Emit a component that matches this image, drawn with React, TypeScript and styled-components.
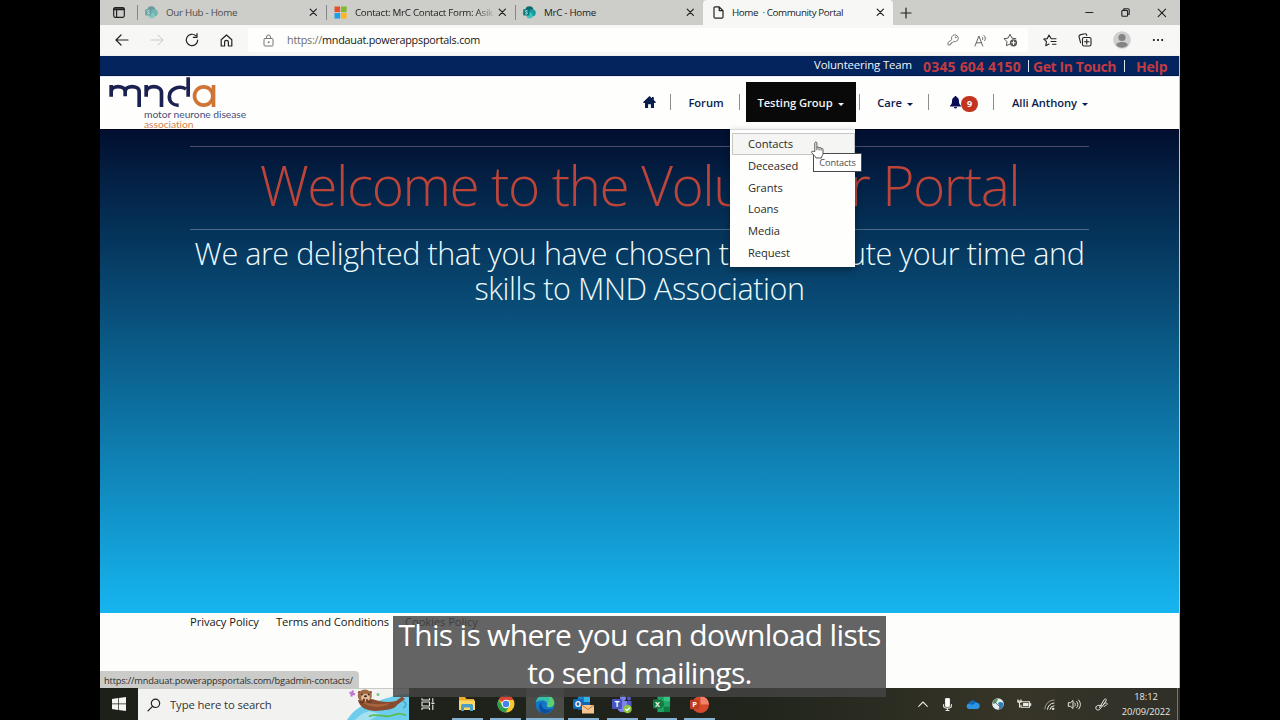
import React from "react";
import styled, { createGlobalStyle } from "styled-components";

const Global = createGlobalStyle`
  * { box-sizing: border-box; }
  body { margin: 0; background: #000; font-family: "Open Sans", "Noto Sans", sans-serif; }
  svg { display: block; flex: none; overflow: visible; }
`;

const Stage = styled.div`
  display: flex;
  justify-content: center;
  width: 1280px;
  height: 720px;
  background: #000;
  overflow: hidden;
`;

const Screen = styled.div`
  position: relative;
  display: flex;
  flex-direction: column;
  width: 1080px;
  height: 720px;
  background: #fdfefb;
`;

/* ---------- Browser chrome ---------- */

const TabStrip = styled.div`
  display: flex;
  align-items: stretch;
  height: 25px;
  background: #cdcdca;
`;

const TabMenu = styled.div`
  display: flex;
  align-items: center;
  width: 37px;
  padding-left: 13px;
`;

const Tab = styled.div<{ $width: number; $active?: boolean; $faded?: boolean }>`
  position: relative;
  display: flex;
  align-items: center;
  width: ${(p) => p.$width}px;
  padding: 0 8px 0 ${(p) => (p.$active ? 10 : 7)}px;
  background: ${(p) => (p.$active ? "#f7f8f5" : "transparent")};
  border-radius: ${(p) => (p.$active ? "4px 4px 0 0" : "0")};
  color: ${(p) => (p.$faded ? "#4c4e4b" : "#20211f")};
  font-size: 9.8px;
  letter-spacing: ${(p) => (p.$active ? "-0.4px" : "-0.3px")};
`;

const TabDivider = styled.span`
  align-self: center;
  width: 1px;
  height: 15px;
  background: #85868a;
`;

const TabTitle = styled.span<{ $clip?: boolean }>`
  flex: 1;
  margin-left: 8px;
  overflow: hidden;
  white-space: pre;
  ${(p) => p.$clip && "mask-image: linear-gradient(90deg, #000 84%, transparent 99%);"}
`;

const NewTab = styled.div`
  display: flex;
  align-items: center;
  flex: 1;
  padding-left: 7px;
`;

const WindowButtons = styled.div`
  display: flex;
  align-items: center;
  gap: 27px;
  padding-right: 13px;
`;

const Toolbar = styled.div`
  display: flex;
  align-items: center;
  height: 31px;
  border-bottom: 1px solid #eef0f1;
  background: #f7f8f5;
`;

const NavButtons = styled.div`
  display: flex;
  align-items: center;
  flex: none;
  gap: 21px;
  width: 148px;
  padding-left: 15px;
`;

const AddressBar = styled.div`
  display: flex;
  align-items: center;
  flex: none;
  width: 780px;
  height: 24px;
  padding: 0 10px 0 15px;
  border-radius: 3px;
  background: #fefffc;
`;

const Url = styled.span`
  flex: 1;
  margin-left: 13px;
  padding-bottom: 1px;
  color: #151614;
  font-size: 10.8px;
  letter-spacing: -0.23px;
`;

const UrlScheme = styled.span`
  color: #6c6d6a;
`;

const AddressActions = styled.div`
  display: flex;
  align-items: center;
  gap: 15px;
`;

const BrowserActions = styled.div`
  display: flex;
  align-items: center;
  flex: none;
  gap: 21px;
  padding-left: 15px;
`;

/* ---------- Portal header ---------- */

const ContactBar = styled.div`
  display: flex;
  align-items: center;
  height: 20px;
  padding-left: 714px;
  border-bottom: 1px solid #061646;
  background: #03245d;
  white-space: nowrap;
`;

const TeamLabel = styled.span`
  width: 109px;
  padding-bottom: 2px;
  color: #f2f5fa;
  font-size: 11.4px;
  letter-spacing: -0.16px;
`;

const ContactLink = styled.span<{ $width: number; $spacing: number }>`
  width: ${(p) => p.$width}px;
  padding-top: 2px;
  color: #c23b42;
  font-size: 14px;
  font-weight: 700;
  letter-spacing: ${(p) => p.$spacing}px;
`;

const ContactDivider = styled.span<{ $after: number }>`
  width: 1px;
  height: 12px;
  margin-right: ${(p) => p.$after}px;
  background: #dfe5ee;
`;

const PortalHeader = styled.div`
  display: flex;
  height: 53px;
  border-top: 1px solid #e6ebf8;
  background: #fefefd;
`;

const Brand = styled.div`
  width: 530px;
  padding: 0 0 0 8px;
  font-family: Lato, sans-serif;
  font-size: 10.3px;
  line-height: 9.5px;
`;

const BrandLine = styled.div<{ $color: string }>`
  padding-left: 36px;
  color: ${(p) => p.$color};
  letter-spacing: -0.05px;
`;

const Nav = styled.div`
  display: grid;
  grid-template-columns: 40px 1px 68px 1px 119px 1px 68px 1px 64px 1px 110px;
  align-items: center;
  justify-items: center;
  padding-bottom: 2px;
`;

const HomeGlyph = styled.svg`
  margin-right: 2px;
`;

const NavDivider = styled.span`
  width: 1px;
  height: 16px;
  background: #8d8d8f;
`;

const NavItem = styled.div<{ $selected?: boolean }>`
  display: flex;
  align-items: center;
  justify-content: center;
  gap: 5px;
  width: ${(p) => (p.$selected ? "110px" : "auto")};
  height: 40px;
  margin-left: 2px;
  background: ${(p) => (p.$selected ? "#090909" : "transparent")};
  color: ${(p) => (p.$selected ? "#f4f4f4" : "#0a1c4c")};
  font-size: 11.2px;
  font-weight: 600;
  letter-spacing: -0.05px;
  white-space: nowrap;
`;

const Caret = styled.span`
  margin-top: 4px;
  border-top: 3px solid currentColor;
  border-left: 3px solid transparent;
  border-right: 3px solid transparent;
`;

const Alerts = styled.div`
  display: flex;
  align-items: center;
  margin-left: 6px;
`;

const AlertCount = styled.span`
  width: 17px;
  height: 16px;
  margin-top: 4px;
  border-radius: 8px;
  background: #c2341f;
  color: #fff;
  font-size: 9px;
  font-weight: 700;
  line-height: 16px;
  text-align: center;
`;

/* ---------- Hero ---------- */

const Hero = styled.div`
  height: 484px;
  padding: 16px 91px 0 90px;
  border-top: 1px solid #000519;
  background: linear-gradient(#010f30, #084a74 35%, #16b5f0);
  text-align: center;
  font-weight: 300;
  white-space: nowrap;
`;

const HeroTitle = styled.div`
  height: 84px;
  border-top: 1px solid #4d4c68;
  border-bottom: 1px solid #4c6a85;
  color: #bc4439;
  font-size: 55px;
  line-height: 75px;
  letter-spacing: -1.47px;
`;

const HeroText = styled.div`
  padding-top: 6px;
  color: #edfafc;
  font-size: 30.5px;
  line-height: 35px;
  letter-spacing: -0.43px;
`;

/* ---------- Footer ---------- */

const Footer = styled.div`
  display: flex;
  height: 75px;
  padding-left: 90px;
  color: #161715;
  font-size: 11.2px;
  line-height: 18px;
  letter-spacing: -0.07px;
`;

const FooterLink = styled.span<{ $width: number }>`
  width: ${(p) => p.$width}px;
`;

/* ---------- Taskbar ---------- */

const Taskbar = styled.div`
  display: flex;
  height: 32px;
  background: linear-gradient(90deg, #1c2019, #20241b 60%, #373528 85%, #302f28);
`;

const StartButton = styled.div`
  display: flex;
  align-items: center;
  justify-content: center;
  width: 38px;
`;

const SearchBox = styled.div`
  display: flex;
  align-items: center;
  width: 271px;
  padding-left: 9px;
  border-top: 1px solid #c9c9c5;
  background: #f2f3f0;
  color: #323331;
  font-size: 11.3px;
  letter-spacing: -0.12px;
`;

const SearchLabel = styled.span`
  width: 178px;
  margin-left: 9px;
`;

const TaskApps = styled.div`
  display: flex;
`;

const TaskApp = styled.div<{ $open?: boolean; $current?: boolean }>`
  display: flex;
  align-items: center;
  justify-content: center;
  width: ${(p) => (p.$current ? 38 : 31)}px;
  margin: 0 ${(p) => (p.$current ? 0.4 : 3.9)}px;
  padding-top: 2px;
  border-bottom: 2px solid ${(p) => (p.$open ? "#84b3d6" : "transparent")};
  background: ${(p) => (p.$current ? "#4a4d47" : "transparent")};
`;

const Tray = styled.div`
  display: flex;
  align-items: center;
  margin-left: auto;
`;

const TrayIcon = styled.span<{ $width: number }>`
  display: flex;
  justify-content: center;
  width: ${(p) => p.$width}px;
`;

const Clock = styled.div`
  width: 62px;
  color: #e6e7e2;
  font-size: 9.3px;
  line-height: 15px;
  letter-spacing: -0.08px;
  text-align: center;
`;

const ShowDesktop = styled.span`
  align-self: stretch;
  width: 3px;
  border-left: 1px solid #77776f;
`;

/* ---------- Overlays ---------- */

const Menu = styled.div`
  position: absolute;
  left: 630px;
  top: 129px;
  width: 125px;
  height: 138px;
  padding: 3px 0 0 2px;
  background: #fefefc;
  border-top: 1px solid #d9dade;
  box-shadow: 0 3px 7px rgba(0, 0, 0, 0.35);
`;

const MenuItem = styled.div<{ $hover?: boolean }>`
  height: 21.75px;
  padding-left: 15px;
  border: 1px solid transparent;
  border-color: ${(p) => (p.$hover ? "#c6c6c6" : "transparent")};
  background: ${(p) => (p.$hover ? "#f5f5f3" : "transparent")};
  color: #2b2c2a;
  font-size: 11.2px;
  line-height: 19.5px;
  letter-spacing: -0.07px;
`;

const Tooltip = styled.div`
  position: absolute;
  left: 713px;
  top: 153px;
  width: 49px;
  height: 19px;
  border: 1px solid #4a4a4a;
  background: #fff;
  color: #4b4b4b;
  font-size: 9.2px;
  line-height: 17px;
  letter-spacing: -0.14px;
  text-align: center;
`;

const Pointer = styled.svg`
  position: absolute;
  left: 710px;
  top: 141px;
`;

const StatusBubble = styled.div`
  position: absolute;
  left: 0;
  top: 671px;
  width: 259px;
  height: 17px;
  padding-left: 4px;
  border-radius: 0 4px 0 0;
  background: #cbcbc9;
  color: #2d2e2d;
  font-size: 9.3px;
  line-height: 19px;
  letter-spacing: -0.17px;
  white-space: nowrap;
`;

const Caption = styled.div`
  position: absolute;
  left: 293px;
  top: 616px;
  width: 493px;
  height: 81px;
  background: rgba(68, 68, 68, 0.83);
  color: #fff;
  font-size: 30px;
  line-height: 38px;
  letter-spacing: -0.69px;
  text-align: center;
  white-space: nowrap;
`;

const PageEdge = styled.span`
  position: absolute;
  right: 0;
  top: 56px;
  width: 1px;
  height: 632px;
  background: #b9c0c9;
`;

/* ---------- Icons ---------- */

const line = { fill: "none", stroke: "#222", strokeWidth: 1.2, strokeLinecap: "round" as const, strokeLinejoin: "round" as const };

const Close = () => (
  <svg width="9" height="9" viewBox="0 0 9 9" {...line}><path d="M1.2 1.2l6.2 6.2M7.4 1.2L1.2 7.4" /></svg>
);

const SharePoint = ({ faded }: { faded?: boolean }) => (
  <svg width="13" height="13" viewBox="0 0 13 13" opacity={faded ? 0.5 : 1}>
    <circle cx="6.4" cy="4.2" r="4" fill="#0b6a6c" />
    <circle cx="9.2" cy="6.8" r="3.6" fill="#1a9ba1" />
    <circle cx="6.6" cy="9.6" r="3" fill="#37c6b8" />
    <rect x="0.2" y="3.2" width="6.2" height="6.4" rx="0.8" fill="#03787c" />
    <path d="M4.6 4.9C3.6 4.3 2.2 4.6 2.3 5.4c.1.9 2.2.8 2.2 1.8 0 .9-1.5 1-2.4.5" stroke="#fff" strokeWidth=".8" fill="none" />
  </svg>
);

const MicrosoftMark = () => (
  <svg width="13" height="13" viewBox="0 0 13 13">
    <path fill="#e5502a" d="M.5.5h5.6v5.6H.5z" /><path fill="#80b92b" d="M7 .5h5.6v5.6H7z" />
    <path fill="#20a0e4" d="M.5 7h5.6v5.6H.5z" /><path fill="#f8b81c" d="M7 7h5.6v5.6H7z" />
  </svg>
);

const PageIcon = () => (
  <svg width="11" height="13" viewBox="0 0 11 13" {...line}><path d="M1 2a1.2 1.2 0 0 1 1.2-1.2h4L10 4.600V11a1.200 1.200 0 0 1-1.200 1.200H2.200A1.200 1.200 0 0 1 1 11zM6.200.8v3.800H10" /></svg>
);

const Logo = () => (
  <svg width="110" height="33" viewBox="24 18 330 99" fill="none" stroke="#1b2150" strokeWidth="11">
    <path d="M33.500 42v35M33.500 62c0-20 42-20 42 0v14M75.500 62c0-20 42-20 42 0v46" />
    <path d="M138.500 42v35M138.500 65c0-24 46-24 46 0v43" />
    <path d="M264.500 19v58M258 54c-22-13-50 1-50 23 0 16 12 26 28 26" />
    <circle cx="311" cy="75" r="27.500" stroke="#cf7535" />
    <path d="M340.500 42v66" stroke="#cf7535" />
  </svg>
);

const Folder = () => (
  <svg width="18" height="16" viewBox="0 0 18 16">
    <path fill="#e8ae2c" d="M1 1h6l1.500 2H16v4H1z" /><path fill="#fbd765" d="M1 4.500h16V14H1z" />
    <path fill="#4c9fc4" d="M3 15V9.500a1.500 1.500 0 0 1 1.500-1.500h9A1.500 1.500 0 0 1 15 9.500V15h-3v-3.500H6V15z" />
  </svg>
);

const Chrome = () => (
  <svg width="18" height="18" viewBox="0 0 18 18">
    <circle cx="9" cy="9" r="8.500" fill="#f9c72c" />
    <path fill="#dd4435" d="M9 9L1.600 4.800a8.500 8.500 0 0 1 14.800 0L16.600 5H9z" />
    <path fill="#2d9d50" d="M1.640 4.750A8.500 8.500 0 0 0 8.500 17.500L12.500 11 9 9 5.500 11z" />
    <circle cx="9" cy="9" r="4.300" fill="#fff" /><circle cx="9" cy="9" r="3.300" fill="#4384ee" />
  </svg>
);

const Edge = () => (
  <svg width="20" height="20" viewBox="0 0 20 20">
    <circle cx="10" cy="10" r="9.500" fill="#1474c8" />
    <path fill="#38bfa9" d="M.8 8.500C2.500-.8 15-2 18.800 6.500c1.500 4-1 6.800-4.300 6.800-2.200 0-3.400-1-2.600-2.200C13 9 10.500 6.500 7.600 6.500 4.500 6.200 2 7 .8 8.500z" />
    <path fill="#6bd45e" d="M13 1.300c3.500 1.200 6.500 4.400 6.300 8-.3 2.700-2.500 4-4.800 4-2 0-3-.9-2.700-1.900 2.200-2.400 3.200-6.400 1.200-10.100z" opacity=".75" />
    <path fill="#0c4f9e" d="M6.500 8.500c-1 5 3 8.600 10.500 6.600C15 18.500 11 20 7.500 19 3.500 16 3 11 6.500 8.500z" />
  </svg>
);

const LetterTile = ({ letter, color }: { letter: string; color: string }) => (
  <>
    <rect x="0" y="5" width="10" height="10" rx="1" fill={color} />
    <text x="5" y="13" fontSize="8" fontWeight="700" fill="#fff" textAnchor="middle">{letter}</text>
  </>
);

const Outlook = () => (
  <svg width="21" height="20" viewBox="0 0 21 20">
    <path fill="#1a83d0" d="M5 2h12v7H5z" /><path fill="#35b1ea" d="M11 2h6v7h-6z" /><path fill="#1463ad" d="M5 8h12v8H5z" />
    <LetterTile letter="O" color="#0f68b8" />
    <path fill="#f6c48d" d="M9 11h12v8.500H9z" /><path fill="none" stroke="#b57534" strokeWidth=".9" d="M9 11l6 4.500 6-4.500" />
  </svg>
);

const Teams = () => (
  <svg width="20" height="20" viewBox="0 0 20 20">
    <circle cx="11" cy="4" r="3" fill="#7b83eb" /><circle cx="17" cy="4.500" r="2" fill="#5059c9" />
    <path fill="#5059c9" d="M13 7h6.500v6a4 4 0 0 1-5 3.500z" /><path fill="#7b83eb" d="M6 7h9v7a5 5 0 0 1-9 2z" />
    <LetterTile letter="T" color="#4b53bc" />
    <circle cx="15.500" cy="15" r="4.300" fill="#8dc344" /><path d="M13.400 15l1.600 1.700 2.800-3.200" fill="none" stroke="#fff" strokeWidth="1.200" />
  </svg>
);

const Excel = () => (
  <svg width="19" height="18" viewBox="0 0 19 20">
    <path fill="#21a366" d="M5 1h14v18H5z" /><path fill="#107c41" d="M5 7h7v6H5zM12 13h7v6h-7z" /><path fill="#33c481" d="M12 1h7v6h-7z" />
    <LetterTile letter="X" color="#107c41" />
  </svg>
);

const PowerPoint = () => (
  <svg width="19" height="19" viewBox="0 0 20 20">
    <circle cx="11" cy="10" r="9" fill="#d5492c" /><path fill="#f08266" d="M11 1a9 9 0 0 1 9 9h-9z" />
    <LetterTile letter="P" color="#bd3d20" />
  </svg>
);

const Otter = () => (
  <svg width="62" height="31" viewBox="0 0 62 31">
    <path fill="#6ccdec" d="M0 31C6 22 13 16 24 14c12-3 24-9 38-9v26z" />
    <path fill="#a3e0f2" d="M8 31c4-5 9-8 15-9l10 3-10 6z" />
    <path fill="none" stroke="#59bd4b" strokeWidth="1.800" d="M22 27.500c9-4 15 2 23-1s9-2 14 0" />
    <path fill="none" stroke="#369fd0" strokeWidth="1.100" d="M56 12c4 2 4 5 0 7" />
    <path fill="#8a4c2e" d="M11 11c2 10 13 12 24 10.500 8-1 13-2 15-5.500l8-6-3-2.500-6 4.500c-8 2-15 1-24-2z" />
    <path fill="#a8663e" d="M14 12c8 4 18 4 29 2-5 5-20 6-29-2z" />
    <circle cx="12.300" cy="3.500" r="1.400" fill="#85492d" /><circle cx="23.500" cy="3.500" r="1.400" fill="#85492d" />
    <ellipse cx="17.800" cy="7" rx="7" ry="6.500" fill="#a06744" />
    <ellipse cx="18.500" cy="8.500" rx="4.400" ry="3.700" fill="#e4bb99" />
    <ellipse cx="18.500" cy="7.200" rx="1.400" ry="1" fill="#2b1a14" />
    <circle cx="15" cy="5.600" r=".8" fill="#2b1a14" /><circle cx="21.500" cy="5.600" r=".8" fill="#2b1a14" />
    <path fill="none" stroke="#6b3823" strokeWidth="2" strokeLinecap="round" d="M13.500 13c2 1 3 0 3.500-2.500M24 12c-2 1.500-3.500 1-4-1" />
    <path stroke="#c272d6" strokeWidth="2.200" d="M2.500 3.500l5.500 2M6 1.500L4.300 7.500" />
    <circle cx="31" cy="5.500" r="1.500" fill="#7cc488" />
  </svg>
);

const white = { fill: "none", stroke: "#e8e9e3", strokeWidth: 1.1, strokeLinecap: "round" as const, strokeLinejoin: "round" as const };

export default function App() {
  return (
    <Stage>
      <Global />
      <Screen>
        <TabStrip>
          <TabMenu>
            <svg width="12" height="11" viewBox="0 0 12 11" {...line}><rect x=".7" y=".7" width="10.600" height="9.600" rx="1.500" /><path d="M1 2.300h10" strokeWidth="2" /><path d="M3.600 3v7" /></svg>
          </TabMenu>
          <TabDivider />
          <Tab $width={188} $faded>
            <SharePoint faded /><TabTitle>Our Hub - Home</TabTitle><Close />
          </Tab>
          <TabDivider />
          <Tab $width={188}>
            <MicrosoftMark /><TabTitle $clip>Contact: MrC Contact Form: Asik</TabTitle><Close />
          </Tab>
          <TabDivider />
          <Tab $width={187}>
            <SharePoint /><TabTitle>MrC - Home</TabTitle><Close />
          </Tab>
          <Tab $width={190} $active>
            <PageIcon /><TabTitle>{"Home  · Community Portal"}</TabTitle><Close />
          </Tab>
          <NewTab><svg width="12" height="12" viewBox="0 0 12 12" {...line}><path d="M6 1v10M1 6h10" /></svg></NewTab>
          <WindowButtons>
            <svg width="9" height="9" viewBox="0 0 9 9" {...line}><path d="M.8 4.500h7" /></svg>
            <svg width="9" height="9" viewBox="0 0 9 9" {...line} strokeWidth={1.1}><rect x=".8" y="2.400" width="5.800" height="5.800" rx="1" /><path d="M2.800 2V.8h4.200a1.200 1.200 0 0 1 1.200 1.200v4.200H7" /></svg>
            <svg width="10" height="10" viewBox="0 0 10 10" {...line} strokeWidth={1.1}><path d="M1.200 1.200l7.400 7.400M8.600 1.200L1.200 8.600" /></svg>
          </WindowButtons>
        </TabStrip>

        <Toolbar>
          <NavButtons>
            <svg width="14" height="12" viewBox="0 0 14 12" {...line}><path d="M13 6H1M6 1L1 6l5 5" /></svg>
            <svg width="14" height="12" viewBox="0 0 14 12" {...line} stroke="#c9cac8" strokeWidth={1}><path d="M1 6h12M8 1l5 5-5 5" /></svg>
            <svg width="14" height="14" viewBox="0 0 14 14" {...line}><path d="M12.700 7A5.700 5.700 0 1 1 10.800 2.700M12 .6v3.700H8.300" /></svg>
            <svg width="13" height="13" viewBox="0 0 13 13" {...line}><path d="M1.200 5.800L6.500 1l5.300 4.800V12H8.400V8.300a1.900 1.900 0 0 0-3.800 0V12H1.200z" /></svg>
          </NavButtons>
          <AddressBar>
            <svg width="11" height="13" viewBox="0 0 11 13" {...line} stroke="#777" strokeWidth={1}><rect x="1" y="4.500" width="9" height="7.500" rx="1" /><path d="M3.500 4.500V3a2 2 0 0 1 4 0v1.500" /><circle cx="5.500" cy="8.200" r=".5" fill="#777" /></svg>
            <Url><UrlScheme>https://</UrlScheme>mndauat.powerappsportals.com</Url>
            <AddressActions>
              <svg width="12" height="12" viewBox="0 0 12 12" {...line} stroke="#777" strokeWidth={1}><path d="M4.600 5.300a3.400 3.400 0 1 1 2.200 2.200L5.700 8.400H4.600v1.200H3.400v1.300H1V8.900z" /><circle cx="8.700" cy="3.300" r=".4" /></svg>
              <svg width="14" height="13" viewBox="0 0 14 13" {...line} stroke="#666" strokeWidth={1}><path d="M1 12l3.900-10L8.800 12M2.300 8.800h5.200M8.200 3c.8.800.8 1.800.4 2.600M10 1.500c1.700 1.500 1.700 3.500.7 5" /></svg>
              <svg width="15" height="14" viewBox="0 0 15 14" {...line} stroke="#555" strokeWidth={1}><path d="M7 11l-3.600 1.700.6-4L1 5.700l4.100-.6L7 1.200l1.900 3.900 4 .6" /><circle cx="10.500" cy="9.800" r="3.600" fill="#555" stroke="none" /><path stroke="#fff" d="M10.500 8v3.600M8.700 9.800h3.600" /></svg>
            </AddressActions>
          </AddressBar>
          <BrowserActions>
            <svg width="14" height="13" viewBox="0 0 14 13" {...line} strokeWidth={1.1}><path d="M8 4.500L6 1 4.300 4.600.8 5.100l2.700 2.600-.7 4L6 10M8.500 4.700H13M8 7.500h5M9.500 10.300H13" /></svg>
            <svg width="14" height="14" viewBox="0 0 14 14" {...line} strokeWidth={1.1}><rect x="4.500" y="4.500" width="8.500" height="8.500" rx="1.600" /><path d="M8.750 6.500v4.500M6.500 8.750H11M2.600 9.800L1 3.600A1.500 1.500 0 0 1 2 1.900L6.800.8a1.500 1.500 0 0 1 1.800 1l.2.700" /></svg>
            <svg width="18" height="18" viewBox="0 0 18 18"><circle cx="9" cy="9" r="8.800" fill="#cfcfcf" /><circle cx="9" cy="6.500" r="3.600" fill="#848484" /><path fill="#848484" d="M3.200 14c0-4 11.600-4 11.600 0-3 3.600-8.600 3.600-11.600 0z" /></svg>
            <svg width="12" height="4" viewBox="0 0 12 4"><circle cx="1.800" cy="2" r="1" /><circle cx="6" cy="2" r="1" /><circle cx="10.200" cy="2" r="1" /></svg>
          </BrowserActions>
        </Toolbar>

        <ContactBar>
          <TeamLabel>Volunteering Team</TeamLabel>
          <ContactLink $width={105} $spacing={0.2}>0345 604 4150</ContactLink>
          <ContactDivider $after={4} />
          <ContactLink $width={91} $spacing={-0.4}>Get In Touch</ContactLink>
          <ContactDivider $after={11} />
          <ContactLink $width={34} $spacing={-0.2}>Help</ContactLink>
        </ContactBar>

        <PortalHeader>
          <Brand>
            <Logo />
            <BrandLine $color="#4a4f78">motor neurone disease</BrandLine>
            <BrandLine $color="#d0854e">association</BrandLine>
          </Brand>
          <Nav>
            <HomeGlyph width="13" height="12" viewBox="0 0 13 12" fill="#0a1c4c"><path d="M6.500 0L9 2.200V1h1.800v2.900L13 6.200l-.8.800H11v5H7.900V8.200H5.100V12H2V7H.8L0 6.200z" /></HomeGlyph>
            <NavDivider />
            <NavItem>Forum</NavItem>
            <NavDivider />
            <NavItem $selected>Testing Group<Caret /></NavItem>
            <NavDivider />
            <NavItem>Care<Caret /></NavItem>
            <NavDivider />
            <Alerts>
              <svg width="11" height="13" viewBox="0 0 11 13" fill="#080b55"><path d="M5.500 0c.8 0 1 .5 1 1C8.600 1.600 9 3.600 9 5.500c0 2.200.8 3.300 2 4.300v.7H0v-.7c1.200-1 2-2.100 2-4.300C2 3.600 2.400 1.600 4.500 1c0-.5.2-1 1-1zM4 11h3a1.500 1.500 0 0 1-3 0z" /></svg>
              <AlertCount>9</AlertCount>
            </Alerts>
            <NavDivider />
            <NavItem>Alli Anthony<Caret /></NavItem>
          </Nav>
        </PortalHeader>

        <Hero>
          <HeroTitle>Welcome to the Volunteer Portal</HeroTitle>
          <HeroText>
            We are delighted that you have chosen to contribute your time and
            <br />
            skills to MND Association
          </HeroText>
        </Hero>

        <Footer>
          <FooterLink $width={86}>Privacy Policy</FooterLink>
          <FooterLink $width={129}>Terms and Conditions</FooterLink>
          <FooterLink $width={90}>Cookies Policy</FooterLink>
        </Footer>

        <Taskbar>
          <StartButton>
            <svg width="14" height="14" viewBox="0 0 14 14" fill="#f4f4f2"><path d="M0 2l6-.9v5.500H0zM6.700 1L14 0v6.600H6.700zM0 7.300h6v5.600L0 12zM6.700 7.300H14V14l-7.300-1z" /></svg>
          </StartButton>
          <SearchBox>
            <svg width="14" height="14" viewBox="0 0 14 14" {...line}><circle cx="8.500" cy="5.300" r="4.200" /><path d="M5.500 8.400L1 12.900" /></svg>
            <SearchLabel>Type here to search</SearchLabel>
            <Otter />
          </SearchBox>
          <TaskApps>
            <TaskApp>
              <svg width="14" height="12" viewBox="0 0 14 12" {...white}><path d="M1 .5v1.500h7.500V.5M1 11.500V10h7.500v1.500M1 4h7.500v4H1zM11.800.5v3M11.800 7v4.500" /><path d="M11 5.300h1.800" strokeWidth="1.600" /></svg>
            </TaskApp>
            <TaskApp $open><Folder /></TaskApp>
            <TaskApp $open><Chrome /></TaskApp>
            <TaskApp $open $current><Edge /></TaskApp>
            <TaskApp $open><Outlook /></TaskApp>
            <TaskApp $open><Teams /></TaskApp>
            <TaskApp $open><Excel /></TaskApp>
            <TaskApp $open><PowerPoint /></TaskApp>
          </TaskApps>
          <Tray>
            <TrayIcon $width={25}><svg width="10" height="6" viewBox="0 0 10 6" {...white}><path d="M.7 5.300L5 1l4.300 4.300" /></svg></TrayIcon>
            <TrayIcon $width={25}><svg width="9" height="13" viewBox="0 0 9 13" {...white}><rect x="2.500" y=".5" width="4" height="8" rx=".8" fill="#fff" /><path d="M.6 6.500v1.800c0 2.400 7.800 2.400 7.800 0V6.500M4.500 10.500v2M3 12.500h3" /></svg></TrayIcon>
            <TrayIcon $width={25}><svg width="14" height="9" viewBox="0 0 14 9"><path fill="#2c94e2" d="M3 9a2.800 2.800 0 0 1-.3-5.500A4 4 0 0 1 10 2.600 3.300 3.300 0 0 1 11.500 9z" /><path fill="#1267b7" d="M2.700 3.500A4 4 0 0 1 10 2.600L6 5z" /></svg></TrayIcon>
            <TrayIcon $width={25}><svg width="12" height="12" viewBox="0 0 12 12"><circle cx="6" cy="6" r="5.800" fill="#e4edf0" /><path fill="#4b9a5a" d="M1 4c1-3 4-3.500 5-3l-2 4-3 1z" /><path fill="#2e7fba" d="M6 5c2-2 5-1 5.500 1-.5 4-3 5.500-5 5.500l1-3z" /><path fill="none" stroke="#557" strokeWidth=".8" d="M2 3l7 7" /></svg></TrayIcon>
            <TrayIcon $width={27}><svg width="14" height="10" viewBox="0 0 14 10" {...white}><path d="M5 2.800h7.500v5.400H4V6M13.700 4.500v2M1 .7v2.500h3V.7M.5 2h4M2.500 3.500V8" /><path d="M6.500 4.500h4.500v2H6.500z" fill="#e8e9e3" /></svg></TrayIcon>
            <TrayIcon $width={24}><svg width="11" height="11" viewBox="0 0 11 11" {...white} strokeWidth={1}><path stroke="#9b9b94" d="M.8 10A9 9 0 0 1 10 1" /><path d="M3.500 10.300A6.500 6.500 0 0 1 10 4M6 10.300A4 4 0 0 1 10 6.800" /><circle cx="9" cy="9.800" r=".8" fill="#e8e9e3" /></svg></TrayIcon>
            <TrayIcon $width={27}><svg width="13" height="11" viewBox="0 0 13 11" {...white} strokeWidth={1}><path d="M.7 3.700h1.800L5 1.500v8L2.500 7.300H.7zM6.800 4c.8 1 .8 2 0 3M8.700 2.500c1.700 2 1.700 4 0 6M10.600 1c2.500 3 2.500 6 0 9" /></svg></TrayIcon>
            <TrayIcon $width={27}><svg width="14" height="13" viewBox="0 0 14 13" {...white} strokeWidth={1}><path d="M1 9c-1 3 2 4 4 2l6-8c1-2-1-3-2-1L4.500 9.500M1 9c.5-1.500 2.500-2 4-1.500 2 .5 3.500 0 4-1.500 1-2 4-1 3 .5-.8 1.500-2.500.8-3 2" /></svg></TrayIcon>
            <Clock>18:12<br />20/09/2022</Clock>
            <ShowDesktop />
          </Tray>
        </Taskbar>

        <PageEdge />
        <Menu>
          <MenuItem $hover>Contacts</MenuItem>
          <MenuItem>Deceased</MenuItem>
          <MenuItem>Grants</MenuItem>
          <MenuItem>Loans</MenuItem>
          <MenuItem>Media</MenuItem>
          <MenuItem>Request</MenuItem>
        </Menu>
        <Tooltip>Contacts</Tooltip>
        <Pointer width="14" height="19" viewBox="0 0 14 19" fill="#fff" stroke="#444" strokeWidth=".9" strokeLinejoin="round">
          <path d="M4.800 10.500V2.200c0-1.600 2.100-1.600 2.100 0v4.500c.3-1 2-.9 2.100.3.500-.8 2-.6 2.100.6.700-.6 1.900-.2 1.900.9v4c0 2-1.500 2.600-1.500 4.500H6c-.5-2-3.500-3.800-4.300-5.300-.6-1.300.8-2 1.700-1.200zM6.900 6.700v2.500M9 7.200v2.200M11.100 7.800v1.800" />
        </Pointer>
        <StatusBubble>https://mndauat.powerappsportals.com/bgadmin-contacts/</StatusBubble>
        <Caption>
          This is where you can download lists
          <br />
          to send mailings.
        </Caption>
      </Screen>
    </Stage>
  );
}
